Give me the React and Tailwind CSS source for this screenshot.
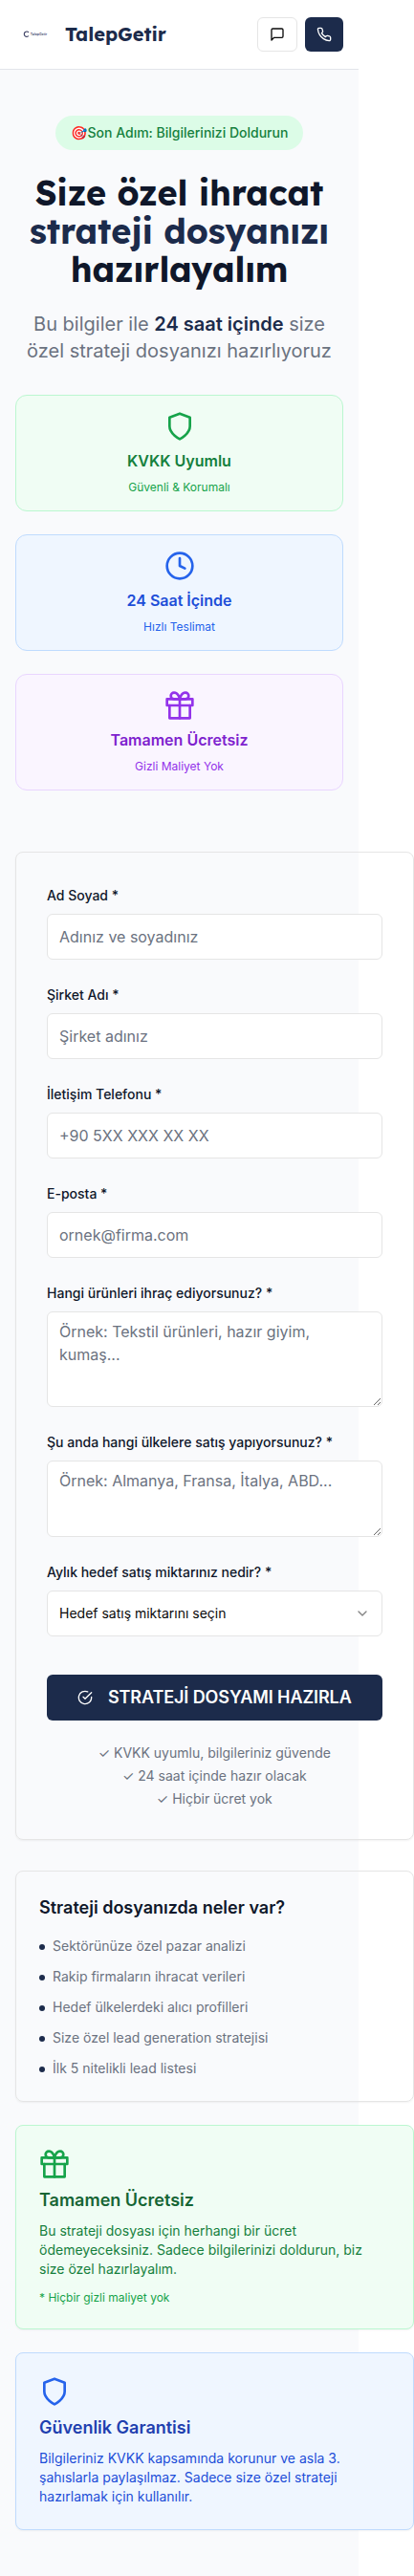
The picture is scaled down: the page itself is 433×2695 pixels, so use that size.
import React from 'react';
import { FiCheckCircle, FiChevronDown, FiClock, FiGift, FiMessageSquare, FiPhone, FiShield } from 'react-icons/fi';

const heading = "font-['Lexend','Inter',sans-serif] font-bold";

function Header() {
  return (
    <header className="flex h-[73px] items-center justify-between border-b border-[#e2e4ea] bg-white px-4">
      <div className="flex items-center gap-3">
        <svg className="h-10 w-10" viewBox="0 0 40 40" aria-label="TalepGetir">
          <path d="M14 17.9a2.7 2.7 0 1 0 0 3.6" fill="none" stroke="#3b3f63" strokeWidth="1.1" />
          <text x="15.8" y="21" fontSize="3.6" fontWeight="600" fontFamily="Inter, sans-serif" fill="#4a4d70" textLength="17.4" lengthAdjust="spacingAndGlyphs">TalepGetir</text>
        </svg>
        <span className={`${heading} text-xl text-[#1c2b4b]`}>TalepGetir</span>
      </div>
      <div className="flex gap-2">
        <button className="flex h-9 items-center rounded-md border border-[#e5e5e5] bg-white px-3 text-[#0a0a0a]">
          <FiMessageSquare size={16} />
        </button>
        <button className="flex h-9 items-center rounded-md bg-[#1c2b4b] px-3 text-white">
          <FiPhone size={16} />
        </button>
      </div>
    </header>
  );
}

function TrustCard({ icon: Icon, title, note, box, iconColor, titleColor, noteColor }) {
  return (
    <div className={`flex flex-col items-center gap-2 rounded-xl border p-4 ${box}`}>
      <Icon size={32} className={iconColor} />
      <div className={`text-base font-semibold ${titleColor}`}>{title}</div>
      <div className={`text-xs ${noteColor}`}>{note}</div>
    </div>
  );
}

function Field({ label, children }) {
  return (
    <div>
      <div className="mb-2 h-6">
        <label className="text-sm font-medium text-[#0f172a]">{label}</label>
      </div>
      {children}
    </div>
  );
}

const control =
  'block w-full rounded-md border border-[#e5e5e5] bg-white px-3 text-base placeholder:text-[#6b7280] placeholder:opacity-100';

function InfoCard({ className, children }) {
  return <div className={`rounded-lg border p-6 shadow-xs ${className}`}>{children}</div>;
}

export default function App() {
  return (
    <div className="w-[433px] overflow-hidden bg-white font-['Inter',sans-serif] text-base">
      <div className="w-[375px] bg-[#f9fafc]">
        <Header />
        <main className="px-4 pt-12 pb-12">
          <section className="mb-16 flex flex-col items-center text-center">
            <div className="mb-6 flex h-9 w-[259px] items-center rounded-full bg-[#dcfce7] px-4 text-sm font-medium whitespace-nowrap text-[#15803d]">
              <span className="w-[17.5px] shrink-0">🎯</span>
              <span>Son Adım: Bilgilerinizi Doldurun</span>
            </div>
            <h1 className={`${heading} mb-[23px] pt-px text-4xl leading-10 tracking-[-0.1px] whitespace-nowrap text-[#0f172a]`}>
              Size özel ihracat
              <span className="block text-[#1c2b4b]">strateji dosyanızı</span>
              hazırlayalım
            </h1>
            <p className="mb-8 text-xl leading-7 text-[#6b7280]">
              Bu bilgiler ile <strong className="font-semibold text-[#1c2b4b]">24 saat içinde</strong> size özel strateji
              dosyanızı hazırlıyoruz
            </p>
            <div className="grid w-full gap-6">
              <TrustCard icon={FiShield} title="KVKK Uyumlu" note="Güvenli & Korumalı" box="bg-[#f0fdf4] border-[#bbf7d0]" iconColor="text-[#16a34a]" titleColor="text-[#15803d]" noteColor="text-[#16a34a]" />
              <TrustCard icon={FiClock} title="24 Saat İçinde" note="Hızlı Teslimat" box="bg-[#eff6ff] border-[#bfdbfe]" iconColor="text-[#2563eb]" titleColor="text-[#1d4ed8]" noteColor="text-[#2563eb]" />
              <TrustCard icon={FiGift} title="Tamamen Ücretsiz" note="Gizli Maliyet Yok" box="bg-[#faf5ff] border-[#e9d5ff]" iconColor="text-[#9333ea]" titleColor="text-[#7e22ce]" noteColor="text-[#9333ea]" />
            </div>
          </section>

          <div className="w-[416.6px]">
            <form className="mb-8 flex flex-col gap-6 rounded-lg border border-[#e5e5e5] p-8 shadow-xs">
              <Field label="Ad Soyad *">
                <input className={`${control} h-12`} placeholder="Adınız ve soyadınız" />
              </Field>
              <Field label="Şirket Adı *">
                <input className={`${control} h-12`} placeholder="Şirket adınız" />
              </Field>
              <Field label="İletişim Telefonu *">
                <input className={`${control} h-12`} placeholder="+90 5XX XXX XX XX" />
              </Field>
              <Field label="E-posta *">
                <input className={`${control} h-12`} placeholder="ornek@firma.com" />
              </Field>
              <Field label="Hangi ürünleri ihraç ediyorsunuz? *">
                <textarea className={`${control} h-[100px] py-2`} placeholder="Örnek: Tekstil ürünleri, hazır giyim, kumaş..." />
              </Field>
              <Field label="Şu anda hangi ülkelere satış yapıyorsunuz? *">
                <textarea className={`${control} h-20 py-2`} placeholder="Örnek: Almanya, Fransa, İtalya, ABD..." />
              </Field>
              <Field label="Aylık hedef satış miktarınız nedir? *">
                <button type="button" className="flex h-12 w-full items-center justify-between rounded-md border border-[#e5e5e5] bg-white px-3 text-sm text-[#0a0a0a]">
                  Hedef satış miktarını seçin
                  <FiChevronDown size={16} className="opacity-50" />
                </button>
              </Field>
              <div className="pt-4">
                <button type="button" className="flex h-12 w-full items-center justify-center gap-4 rounded-md bg-[#1c2b4b] text-lg font-semibold tracking-[-0.1px] whitespace-nowrap text-white">
                  <FiCheckCircle size={16} className="shrink-0" />
                  STRATEJİ DOSYAMI HAZIRLA
                </button>
              </div>
              <div className="flex flex-col gap-1 text-center text-sm text-[#6b7280]">
                <p>✓ KVKK uyumlu, bilgileriniz güvende</p>
                <p>✓ 24 saat içinde hazır olacak</p>
                <p>✓ Hiçbir ücret yok</p>
              </div>
            </form>

            <div className="flex flex-col gap-6">
              <InfoCard className="border-[#e5e5e5]">
                <h3 className="mb-4 text-lg leading-7 font-semibold text-[#0f172a]">Strateji dosyanızda neler var?</h3>
                <ul className="flex flex-col gap-3 text-sm text-[#6b7280]">
                  {[
                    'Sektörünüze özel pazar analizi',
                    'Rakip firmaların ihracat verileri',
                    'Hedef ülkelerdeki alıcı profilleri',
                    'Size özel lead generation stratejisi',
                    'İlk 5 nitelikli lead listesi',
                  ].map((item) => (
                    <li key={item} className="flex items-start gap-2">
                      <span className="mt-2 size-1.5 rounded-full bg-[#1c2b4b]" />
                      {item}
                    </li>
                  ))}
                </ul>
              </InfoCard>

              <InfoCard className="border-[#bbf7d0] bg-[#f0fdf4]">
                <FiGift size={32} className="mb-2 text-[#16a34a]" />
                <h3 className="mb-2 text-lg leading-7 font-semibold text-[#166534]">Tamamen Ücretsiz</h3>
                <p className="mb-3 text-sm text-[#15803d]">
                  Bu strateji dosyası için herhangi bir ücret ödemeyeceksiniz. Sadece bilgilerinizi doldurun, biz size
                  özel hazırlayalım.
                </p>
                <p className="text-xs text-[#16a34a]">* Hiçbir gizli maliyet yok</p>
              </InfoCard>

              <InfoCard className="border-[#bfdbfe] bg-[#eff6ff]">
                <FiShield size={32} className="mb-2 text-[#2563eb]" />
                <h3 className="mb-2 text-lg leading-7 font-semibold text-[#1e40af]">Güvenlik Garantisi</h3>
                <p className="text-sm text-[#1d4ed8]">
                  Bilgileriniz KVKK kapsamında korunur ve asla 3. şahıslarla paylaşılmaz. Sadece size özel strateji
                  hazırlamak için kullanılır.
                </p>
              </InfoCard>
            </div>
          </div>
        </main>
      </div>
    </div>
  );
}
